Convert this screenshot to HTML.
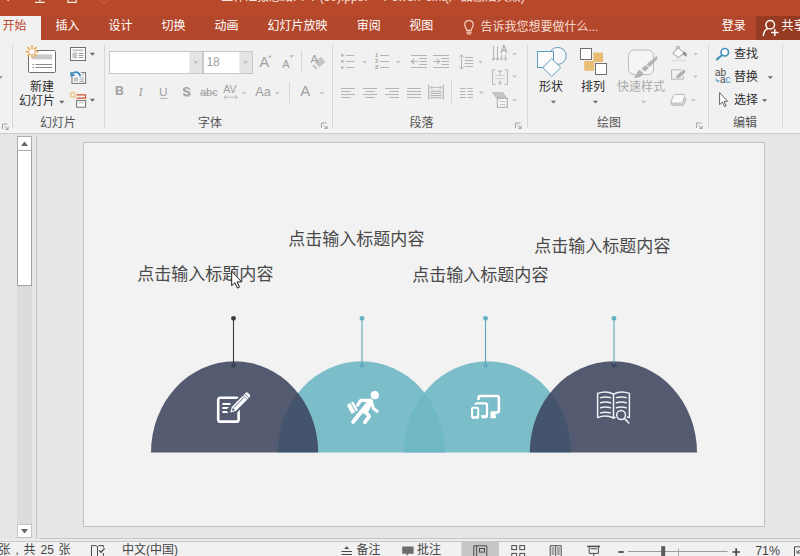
<!DOCTYPE html>
<html lang="zh-CN"><head><meta charset="utf-8"><title>PowerPoint</title>
<style>

*{box-sizing:border-box;margin:0;padding:0}
html,body{width:800px;height:556px;overflow:hidden;background:#e6e6e6;font-family:"Liberation Sans","Noto Sans CJK SC",sans-serif}
#app{position:relative;width:800px;height:556px;overflow:hidden;background:#e6e6e6}
.abs{position:absolute}
.t{position:absolute;display:block;white-space:nowrap;overflow:visible;line-height:1}
.t .h{position:absolute;left:0;top:0;color:inherit;white-space:nowrap;line-height:1.3;font-family:"Liberation Sans","Noto Sans CJK SC",sans-serif}
#titlebar{left:0;top:0;width:800px;height:40px;background:linear-gradient(#b9492b 0,#b9492b 16px,#b3472b 16px,#b3472b 40px)}
#tab-home{left:0;top:16px;width:41px;height:24px;background:#f1f1f1}
#share{left:756px;top:16px;width:44px;height:24px;background:#963a22}
#ribbon{left:0;top:40px;width:800px;height:93px;background:#f1f1f1}
#ribbon-line{left:0;top:129px;width:800px;height:5px;background:#f4f4f4;border-bottom:1px solid #cdcdcd}
.vsep{position:absolute;width:1px;background:#d8d8d8}
#work{left:0;top:134px;width:800px;height:405px;background:#e6e6e6}
#pane{left:39px;top:134px;width:770px;height:405px;border-bottom:1px solid #c6c6c6}
#status{left:0;top:539px;width:800px;height:17px;background:#f1f1f1;border-top:3px solid #ececec}
#status:after{content:'';position:absolute;left:0;top:-1px;width:800px;height:1px;background:#c8c8c8}
#slide{left:83px;top:142px;width:682px;height:385px;background:#f2f2f2;border:1px solid #c2c2c2}
.lat{position:absolute;white-space:nowrap;line-height:1;font-family:"Liberation Sans",sans-serif}

</style></head><body>
<div id="app">
<header class="titlebar-tabs">
<div id="titlebar" class="abs"></div>
<div id="tab-home" class="abs"></div>
<div id="share" class="abs"></div>
<span class="t" style="left:2.60px;top:18.70px;width:24.00px;height:15.60px;font-size:12px;color:#b7472a;"><span class="h">开始</span></span>
<span class="t" style="left:55.40px;top:18.70px;width:24.00px;height:15.60px;font-size:12px;color:#ffffff;"><span class="h">插入</span></span>
<span class="t" style="left:108.60px;top:18.70px;width:24.00px;height:15.60px;font-size:12px;color:#ffffff;"><span class="h">设计</span></span>
<span class="t" style="left:161.60px;top:18.70px;width:24.00px;height:15.60px;font-size:12px;color:#ffffff;"><span class="h">切换</span></span>
<span class="t" style="left:214.60px;top:18.70px;width:24.00px;height:15.60px;font-size:12px;color:#ffffff;"><span class="h">动画</span></span>
<span class="t" style="left:267.60px;top:18.70px;width:60.00px;height:15.60px;font-size:12px;color:#ffffff;"><span class="h">幻灯片放映</span></span>
<span class="t" style="left:356.80px;top:18.70px;width:24.00px;height:15.60px;font-size:12px;color:#ffffff;"><span class="h">审阅</span></span>
<span class="t" style="left:409.20px;top:18.70px;width:24.00px;height:15.60px;font-size:12px;color:#ffffff;"><span class="h">视图</span></span>
<span class="t" style="left:480.40px;top:19.50px;width:118.01px;height:15.60px;font-size:12px;color:#f8ddd3;"><span class="h">告诉我您想要做什么...</span></span>
<span class="t" style="left:721.80px;top:18.70px;width:24.00px;height:15.60px;font-size:12px;color:#ffffff;"><span class="h">登录</span></span>
<span class="t" style="left:781.40px;top:18.70px;width:18.60px;height:15.60px;font-size:12px;color:#ffffff;"><span class="h">共享</span></span>
<span class="t" style="left:221.20px;top:-9.80px;width:143.93px;height:15.60px;font-size:12px;color:#f6e3dc;"><span class="h">工作汇报总结PPT (50).pptx</span></span><span class="t" style="left:374.60px;top:-9.80px;width:4.16px;height:15.60px;font-size:12px;color:#f6e3dc;"><span class="h">-</span></span><span class="t" style="left:383.40px;top:-9.80px;width:144.12px;height:15.60px;font-size:12px;color:#f6e3dc;"><span class="h">PowerPoint(产品激活失败)</span></span>
<svg class="abs" style="left:0;top:0" width="800" height="40" viewBox="0 0 800 40"><path d="M35 2.4 H44.8 M39.9 0 V2.4" stroke="#fbeee9" stroke-width="1.1" fill="none"/><path d="M67.9 0 V2.4 H76.2 V0" stroke="#fbeee9" stroke-width="1.1" fill="none"/><circle cx="8.2" cy="0" r="1.1" fill="#f3d6cc"/><circle cx="104" cy="-3.6" r="6" fill="none" stroke="#c4593d" stroke-width="1.6"/><g fill="none" stroke="#f5cdbf" stroke-width="1.25" stroke-linecap="round"><path d="M466.9 30.4 C466.9 28.4 464.7 27.6 464.7 24.8 C464.7 22.4 466.5 20.6 469 20.6 C471.5 20.6 473.3 22.4 473.3 24.8 C473.3 27.6 471.1 28.4 471.1 30.4 Z"/><path d="M466.8 32.2 H471.2 M467.4 33.8 H470.6"/></g><g fill="none" stroke="#fff" stroke-width="1.5" stroke-linecap="round"><circle cx="770.2" cy="24.7" r="4.3"/><path d="M763.4 35.4 C763.6 32 765.4 29.8 767.6 28.6"/><path d="M774.8 29.4 V35.6 M771.7 32.5 H777.9" stroke-width="1.5"/></g></svg>
</header>
<section class="ribbon">
<div id="ribbon" class="abs"></div>
<div id="ribbon-line" class="abs"></div>
<div class="vsep" style="left:12px;top:44px;height:84px"></div>
<div class="vsep" style="left:104px;top:44px;height:84px"></div>
<div class="vsep" style="left:332px;top:44px;height:84px"></div>
<div class="vsep" style="left:527px;top:44px;height:84px"></div>
<div class="vsep" style="left:708px;top:44px;height:84px"></div>
<div class="vsep" style="left:782px;top:44px;height:84px"></div>
<span class="t" style="left:30.00px;top:80.20px;width:24.00px;height:15.60px;font-size:12px;color:#2e2e2e;"><span class="h">新建</span></span>
<span class="t" style="left:19.00px;top:93.70px;width:36.00px;height:15.60px;font-size:12px;color:#2e2e2e;"><span class="h">幻灯片</span></span>
<span class="t" style="left:40.00px;top:116.20px;width:36.00px;height:15.60px;font-size:12px;color:#555;"><span class="h">幻灯片</span></span>
<span class="t" style="left:198.00px;top:116.20px;width:24.00px;height:15.60px;font-size:12px;color:#555;"><span class="h">字体</span></span>
<span class="t" style="left:409.50px;top:116.20px;width:24.00px;height:15.60px;font-size:12px;color:#555;"><span class="h">段落</span></span>
<span class="t" style="left:539.00px;top:80.20px;width:24.00px;height:15.60px;font-size:12px;color:#2e2e2e;"><span class="h">形状</span></span>
<span class="t" style="left:581.00px;top:80.20px;width:24.00px;height:15.60px;font-size:12px;color:#2e2e2e;"><span class="h">排列</span></span>
<span class="t" style="left:617.00px;top:80.20px;width:48.00px;height:15.60px;font-size:12px;color:#ababab;"><span class="h">快速样式</span></span>
<span class="t" style="left:597.00px;top:116.20px;width:24.00px;height:15.60px;font-size:12px;color:#555;"><span class="h">绘图</span></span>
<span class="t" style="left:734.00px;top:47.20px;width:24.00px;height:15.60px;font-size:12px;color:#2e2e2e;"><span class="h">查找</span></span>
<span class="t" style="left:734.00px;top:70.20px;width:24.00px;height:15.60px;font-size:12px;color:#2e2e2e;"><span class="h">替换</span></span>
<span class="t" style="left:734.00px;top:93.20px;width:24.00px;height:15.60px;font-size:12px;color:#2e2e2e;"><span class="h">选择</span></span>
<span class="t" style="left:733.00px;top:116.20px;width:24.00px;height:15.60px;font-size:12px;color:#555;"><span class="h">编辑</span></span>
<svg class="abs" style="left:0;top:0" width="800" height="140" viewBox="0 0 800 140"><path d="M-2.50 75.90 H2.90 L0.20 78.90Z" fill="#9a9a9a"/><path d="M2.5 129.0 V124.0 H7.5" fill="none" stroke="#a4a4a4" stroke-width="1"/><path d="M4.6 126.1 L7.6 129.1" stroke="#a4a4a4" stroke-width="1"/><path d="M8.6 126.5 V130.1 H5 Z" fill="#a4a4a4"/><rect x="28.5" y="50.5" width="27" height="22" rx="1.2" fill="#fff" stroke="#6e6e6e"/><rect x="32.4" y="54.4" width="19.8" height="5" fill="#c9c9c9"/><path d="M32.4 64.5 h1.6 M35.4 64.5 H52.2 M32.4 67.5 h1.6 M35.4 67.5 H52.2" stroke="#8c8c8c" stroke-width="1"/><g transform="translate(32 51.7)"><circle r="4.4" fill="#f1f1f1"/><g stroke="#e9b35c" stroke-width="1.8" stroke-linecap="butt"><path d="M0 -2.6 V-6.4" transform="rotate(0)"/><path d="M0 -2.6 V-6.4" transform="rotate(45)"/><path d="M0 -2.6 V-6.4" transform="rotate(90)"/><path d="M0 -2.6 V-6.4" transform="rotate(135)"/><path d="M0 -2.6 V-6.4" transform="rotate(180)"/><path d="M0 -2.6 V-6.4" transform="rotate(225)"/><path d="M0 -2.6 V-6.4" transform="rotate(270)"/><path d="M0 -2.6 V-6.4" transform="rotate(315)"/></g><circle r="2.1" fill="#fff"/></g><path d="M59.20 100.85 H64.40 L61.80 103.75Z" fill="#6a6a6a"/><rect x="70.5" y="47.5" width="15" height="13" fill="#fff" stroke="#6e6e6e"/><rect x="72.5" y="49.4" width="11" height="1.8" fill="#c4c4c4"/><rect x="72.5" y="52.4" width="4.6" height="6" fill="#c4c4c4"/><path d="M78.6 53.5 H83.5 M78.6 55.5 H83.5 M78.6 57.5 H83.5" stroke="#9a9a9a" stroke-width="1"/><path d="M89.80 52.85 H95.00 L92.40 55.75Z" fill="#6a6a6a"/><rect x="72" y="72.6" width="13.6" height="10.8" fill="#fff" stroke="#6e6e6e"/><rect x="73.8" y="77.4" width="4.4" height="4.2" fill="#c4c4c4"/><path d="M79.5 77.9 H84 M79.5 79.9 H84 M79.5 81.7 H84" stroke="#9a9a9a" stroke-width="0.9"/><path d="M78.8 74.6 H84" stroke="#c4c4c4" stroke-width="1.4"/><path d="M80.4 76.2 C80.2 72.6 76.4 70.8 73 72.8" fill="none" stroke="#f1f1f1" stroke-width="4"/><path d="M80.2 76.4 C80 72.6 76.4 71 73.2 73" fill="none" stroke="#3e8fc6" stroke-width="1.9"/><path d="M70.2 71.6 L70.6 76.8 L75.6 75.4 Z" fill="#3e8fc6"/><path d="M76.6 94.9 H85.6 V98.1 H76.6" fill="none" stroke="#d1512e" stroke-width="1.1"/><rect x="76.6" y="100.6" width="9" height="6.6" fill="#fff" stroke="#6e6e6e" stroke-width="1"/><path d="M78.4 102.8 H83.8" stroke="#c4c4c4" stroke-width="1.2"/><g transform="translate(73 94.8)"><g stroke="#ecb96c" stroke-width="1"><path d="M0 -1.3 V-3.6" transform="rotate(0)"/><path d="M0 -1.3 V-3.6" transform="rotate(45)"/><path d="M0 -1.3 V-3.6" transform="rotate(90)"/><path d="M0 -1.3 V-3.6" transform="rotate(135)"/><path d="M0 -1.3 V-3.6" transform="rotate(180)"/><path d="M0 -1.3 V-3.6" transform="rotate(225)"/><path d="M0 -1.3 V-3.6" transform="rotate(270)"/><path d="M0 -1.3 V-3.6" transform="rotate(315)"/></g></g><path d="M89.80 98.85 H95.00 L92.40 101.75Z" fill="#6a6a6a"/><rect x="109.5" y="51.5" width="93" height="22" fill="#fff" stroke="#c8c8c8"/><rect x="189.4" y="52" width="12.6" height="21" fill="#e4e4e4"/><path d="M193.40 61.30 H198.00 L195.70 63.90Z" fill="#b8b8b8"/><rect x="203.5" y="51.5" width="49" height="22" fill="#fff" stroke="#c8c8c8"/><rect x="239.4" y="52" width="12.6" height="21" fill="#e4e4e4"/><path d="M243.30 61.30 H247.90 L245.60 63.90Z" fill="#b8b8b8"/><path d="M267.6 57.6 L269.8 55 L272 57.6Z" fill="#b4b4b4"/><path d="M289.4 55.2 H293.8 L291.6 57.8Z" fill="#b4b4b4"/><path d="M301.5 50.5 V71.5" stroke="#d6d6d6"/><path d="M320.8 56.8 L325.6 62 L319.4 67.2 L314.6 62.2 Z" fill="#c6c6c6"/><path d="M313 65.2 L316.8 68.8" stroke="#b0b0b0" stroke-width="1.5"/><path d="M224 97.2 H237.4 M226.2 95.2 L224 97.2 L226.2 99.2 M235.2 95.2 L237.4 97.2 L235.2 99.2" fill="none" stroke="#b4b4b4" stroke-width="0.9"/><path d="M242.00 91.90 H246.60 L244.30 94.50Z" fill="#c2c2c2"/><path d="M275.00 91.90 H279.60 L277.30 94.50Z" fill="#c2c2c2"/><path d="M289.5 82 V103.5" stroke="#d6d6d6"/><path d="M319.50 91.90 H324.10 L321.80 94.50Z" fill="#c2c2c2"/><path d="M321.5 128.0 V123.0 H326.5" fill="none" stroke="#a4a4a4" stroke-width="1"/><path d="M323.6 125.1 L326.6 128.1" stroke="#a4a4a4" stroke-width="1"/><path d="M327.6 125.5 V129.1 H324 Z" fill="#a4a4a4"/><path d="M159.6 98.4 H167.4" stroke="#b4b4b4" stroke-width="1"/><path d="M200.2 93.2 H216.4" stroke="#b4b4b4" stroke-width="0.9"/><g fill="#b4b4b4"><circle cx="342.3" cy="55.4" r="1.4"/><circle cx="342.3" cy="61.5" r="1.4"/><circle cx="342.3" cy="67.6" r="1.4"/></g><path d="M345.8 55.5 H354.2 M345.8 61.5 H354.2 M345.8 67.5 H354.2" stroke="#b4b4b4"/><path d="M362.20 60.90 H366.80 L364.50 63.50Z" fill="#c2c2c2"/><path d="M380.2 55.5 H389 M380.2 61.5 H389 M380.2 67.5 H389" stroke="#b4b4b4"/><path d="M396.00 60.90 H400.60 L398.30 63.50Z" fill="#c2c2c2"/><path d="M411 55.5 H427 M419.4 58.5 H427 M419.4 61.5 H427 M419.4 64.5 H427 M411 67.5 H427" stroke="#b4b4b4"/><path d="M411.4 61.5 H417.6 M414 58.9 L411.4 61.5 L414 64.1" fill="none" stroke="#b4b4b4" stroke-width="1.2"/><path d="M433 55.5 H449 M441.4 58.5 H449 M441.4 61.5 H449 M441.4 64.5 H449 M433 67.5 H449" stroke="#b4b4b4"/><path d="M433.4 61.5 H439.6 M437 58.9 L439.6 61.5 L437 64.1" fill="none" stroke="#b4b4b4" stroke-width="1.2"/><path d="M464.8 57.5 H473 M464.8 60.5 H473 M464.8 63.5 H473 M464.8 66.5 H473" stroke="#b4b4b4"/><path d="M461.5 54.8 V69 M459.2 57.2 L461.5 54.8 L463.8 57.2 M459.2 66.6 L461.5 69 L463.8 66.6" fill="none" stroke="#b4b4b4" stroke-width="1"/><path d="M478.30 60.90 H482.90 L480.60 63.50Z" fill="#c2c2c2"/><path d="M493.5 46 V60 M497.5 46 V60 M491.9 58 L493.5 60.4 L495.1 58 M495.9 58 L497.5 60.4 L499.1 58" fill="none" stroke="#b4b4b4" stroke-width="1"/><path d="M501.6 54.5 V60 M505.6 54.5 V60 M500.2 58.2 L501.6 60.4 L503 58.2 M504.2 58.2 L505.6 60.4 L507 58.2" fill="none" stroke="#b4b4b4" stroke-width="0.9"/><path d="M512.30 53.00 H516.90 L514.60 55.60Z" fill="#c2c2c2"/><path d="M495.5 69.8 H492.6 V84.4 H495.5 M504.5 69.8 H507.4 V84.4 H504.5" fill="none" stroke="#b4b4b4" stroke-width="1"/><path d="M495 75.5 H505 M495 78.5 H505" stroke="#cfcfcf"/><path d="M500 70 V75 M498 72 L500 70 L502 72 M500 79.6 V84.4 M498 82.4 L500 84.4 L502 82.4" fill="none" stroke="#b4b4b4" stroke-width="1"/><path d="M512.30 75.50 H516.90 L514.60 78.10Z" fill="#c2c2c2"/><path d="M341 88.5 H355 M341 91.5 H350.4 M341 94.5 H355 M341 97.5 H350.4" stroke="#b4b4b4"/><path d="M363 88.5 H377 M365.4 91.5 H374.6 M363 94.5 H377 M365.4 97.5 H374.6" stroke="#b4b4b4"/><path d="M385 88.5 H399 M389.6 91.5 H399 M385 94.5 H399 M389.6 97.5 H399" stroke="#b4b4b4"/><path d="M407 88.5 H421 M407 91.5 H421 M407 94.5 H421 M407 97.5 H421" stroke="#b4b4b4"/><path d="M428.7 84.6 V99.6 M443.3 84.6 V99.6" stroke="#a6a6a6" stroke-width="0.9"/><path d="M430.6 87.6 H441.4 M432.4 85.8 L430.6 87.6 L432.4 89.4 M439.6 85.8 L441.4 87.6 L439.6 89.4" fill="none" stroke="#b4b4b4" stroke-width="0.9"/><path d="M430.4 91.2 H441.6 M430.4 93.4 H441.6 M430.4 95.6 H441.6 M430.4 97.8 H441.6" stroke="#a6a6a6" stroke-width="0.9"/><path d="M451.5 80.5 V103" stroke="#d6d6d6"/><path d="M460 88.5 H465.6 M467.4 88.5 H473 M460 91.5 H465.6 M467.4 91.5 H473 M460 94.5 H465.6 M467.4 94.5 H473 M460 97.5 H465.6 M467.4 97.5 H473" stroke="#b4b4b4"/><path d="M479.00 91.60 H483.60 L481.30 94.20Z" fill="#c2c2c2"/><path d="M491.6 92 H503 L507.4 98.2 H496 Z" fill="#c4c4c4"/><rect x="497.3" y="98.3" width="10" height="9" fill="#f6f6f6" stroke="#a8a8a8" stroke-width="1"/><path d="M499.4 101.5 H505.4 M499.4 104.5 H505.4" stroke="#c4c4c4"/><path d="M512.30 98.90 H516.90 L514.60 101.50Z" fill="#c2c2c2"/><path d="M515.5 128.0 V123.0 H520.5" fill="none" stroke="#a4a4a4" stroke-width="1"/><path d="M517.6 125.1 L520.6 128.1" stroke="#a4a4a4" stroke-width="1"/><path d="M521.6 125.5 V129.1 H518 Z" fill="#a4a4a4"/><circle cx="557.7" cy="55.9" r="8.5" fill="#f8f8f8" stroke="#5d9dbe" stroke-width="1"/><rect x="537.5" y="51.5" width="16" height="16" fill="#fafafa" stroke="#5d9dbe" stroke-width="1"/><path d="M551.8 58.6 L560.8 67.5 L551.8 76.4 L542.8 67.5 Z" fill="#fbfbfb" stroke="#5d9dbe" stroke-width="1"/><path d="M550.80 100.65 H556.00 L553.40 103.55Z" fill="#6a6a6a"/><rect x="593.2" y="52.6" width="9.8" height="9.4" fill="#e8bc72"/><rect x="584.2" y="61" width="10" height="9.8" fill="#e8bc72"/><rect x="580.5" y="48.5" width="11" height="11" fill="#fff" stroke="#707070"/><rect x="595.5" y="63.5" width="11" height="11" fill="#fff" stroke="#707070"/><path d="M592.90 100.65 H598.10 L595.50 103.55Z" fill="#6a6a6a"/><rect x="628.5" y="50" width="25" height="24.6" rx="5.6" fill="#f5f5f5" stroke="#bdbdbd"/><path d="M633.6 77.6 C637.4 78.2 642.4 77 643.2 73.4 C643.6 71 641.8 69.4 639.6 70 C636.6 70.8 637.4 74.6 633.6 77.6 Z" fill="#b4b4b4"/><path d="M641.6 68.6 L645 71.8 L657 59.4 L657.2 55.4 Z" fill="#b4b4b4"/><path d="M640 69.4 L644.2 73.4" stroke="#f3f3f3" stroke-width="1.1"/><path d="M645.6 64.2 L649.4 67.6" stroke="#f3f3f3" stroke-width="1.1"/><path d="M641.10 100.65 H646.30 L643.70 103.55Z" fill="#c2c2c2"/><path d="M678 47.6 L683.8 52.6 L678.6 57.8 L672.8 53.4 Z" fill="#fafafa" stroke="#b4b4b4" stroke-width="1.1" stroke-linejoin="round"/><path d="M676.6 50.4 V46.4 H679.4 V49" fill="none" stroke="#b4b4b4" stroke-width="1"/><path d="M683.6 51.4 C686.4 51.8 687.4 54.4 686.6 57.6 C686 56 685.2 55.2 683 55.4 Z" fill="#8f8f8f"/><rect x="672" y="59.4" width="14.4" height="2.4" fill="#e2e2e2"/><path d="M693.20 53.00 H697.80 L695.50 55.60Z" fill="#c2c2c2"/><path d="M681.4 69.8 H671.6 V79.2 H683.4 V76.4" fill="none" stroke="#b4b4b4" stroke-width="1"/><path d="M675.6 79 L676.6 75.6 L683.6 69.2 L686.2 71.8 L679.2 78.2 Z" fill="#adadad" stroke="#f1f1f1" stroke-width="0.6"/><path d="M693.20 75.50 H697.80 L695.50 78.10Z" fill="#c2c2c2"/><path d="M675.4 94.4 H683 C684.6 94.4 685.2 95.6 684.6 97 L682.8 101.4 C682.2 102.8 681.4 103.2 680 103.2 H673 C671.4 103.2 670.8 102 671.4 100.6 L673.2 96.2 C673.8 94.8 674.4 94.4 675.4 94.4 Z" fill="#fafafa" stroke="#b4b4b4" stroke-width="1"/><path d="M671.2 101.6 C671 103.8 672 105.2 674 105.2 H680.6 C682.6 105.2 683.6 104.2 684.4 102.4 L685.6 98.6" fill="none" stroke="#c2c2c2" stroke-width="1.8" stroke-linecap="round"/><path d="M691.10 98.90 H695.70 L693.40 101.50Z" fill="#c2c2c2"/><path d="M696.5 128.0 V123.0 H701.5" fill="none" stroke="#a4a4a4" stroke-width="1"/><path d="M698.6 125.1 L701.6 128.1" stroke="#a4a4a4" stroke-width="1"/><path d="M702.6 125.5 V129.1 H699 Z" fill="#a4a4a4"/><path d="M722 55 L717 59.4" stroke="#4793b9" stroke-width="2.2" stroke-linecap="round"/><circle cx="724.8" cy="52.2" r="3.7" fill="#fff" stroke="#4793b9" stroke-width="1.7"/><path d="M716.2 78.6 V81 H719 M718 79.8 L719.2 81 L718 82.2" fill="none" stroke="#4793b9" stroke-width="0.9"/><path d="M767.70 76.15 H772.90 L770.30 79.05Z" fill="#6a6a6a"/><path d="M719.6 92.6 V104.6 L722.4 102 L724.6 106.6 L726.2 105.8 L724 101.4 L727.6 101.2 Z" fill="#fff" stroke="#555" stroke-width="0.9" stroke-linejoin="round"/><path d="M762.00 99.15 H767.20 L764.60 102.05Z" fill="#6a6a6a"/></svg>
<span class="t" style="left:206.40px;top:54.76px;width:13.32px;height:15.60px;font-size:12px;color:#a0a0a0;"><span class="h">18</span></span>
<span class="t" style="left:259.40px;top:52.82px;width:9.60px;height:18.72px;font-size:14.4px;color:#a0a0a0;"><span class="h">A</span></span>
<span class="t" style="left:282.20px;top:56.52px;width:7.27px;height:14.17px;font-size:10.9px;color:#a0a0a0;"><span class="h">A</span></span>
<span class="t" style="left:310.60px;top:50.84px;width:7.74px;height:15.08px;font-size:11.6px;color:#a0a0a0;"><span class="h">A</span></span>
<span class="t" style="left:115.00px;top:84.13px;width:8.81px;height:15.86px;font-size:12.2px;color:#a0a0a0;"><span class="h" style="font-weight:bold">B</span></span>
<span class="t" style="left:138.40px;top:83.68px;width:4.90px;height:16.38px;font-size:12.6px;color:#a0a0a0;"><span class="h" style="font-family:'Liberation Serif',serif;font-style:italic">I</span></span>
<span class="t" style="left:159.00px;top:84.99px;width:8.65px;height:15.34px;font-size:11.8px;color:#a0a0a0;"><span class="h">U</span></span>
<span class="t" style="left:182.20px;top:83.86px;width:8.40px;height:16.38px;font-size:12.6px;color:#a0a0a0;filter:drop-shadow(1px 1.2px 0.6px #cfcfcf)"><span class="h" style="font-weight:bold">S</span></span>
<span class="t" style="left:199.90px;top:85.07px;width:18.94px;height:14.56px;font-size:11.2px;color:#a0a0a0;"><span class="h">abc</span></span>
<span class="t" style="left:223.20px;top:82.93px;width:14.14px;height:13.78px;font-size:10.6px;color:#a0a0a0;"><span class="h">AV</span></span>
<span class="t" style="left:255.20px;top:84.45px;width:14.99px;height:16.64px;font-size:12.8px;color:#a0a0a0;"><span class="h">Aa</span></span>
<span class="t" style="left:300.30px;top:82.18px;width:9.94px;height:19.37px;font-size:14.9px;color:#a0a0a0;"><span class="h">A</span></span>
<span class="t" style="left:715.00px;top:65.94px;width:11.21px;height:13.00px;font-size:10px;color:#4a4a4a;"><span class="h">ab</span></span>
<span class="t" style="left:720.00px;top:72.94px;width:5.63px;height:13.00px;font-size:10px;color:#4a4a4a;"><span class="h">a</span></span>
<span class="t" style="left:725.60px;top:72.94px;width:5.10px;height:13.00px;font-size:10px;color:#3b8fc0;"><span class="h">c</span></span>
<span class="t" style="left:375.00px;top:51.91px;width:3.42px;height:7.54px;font-size:5.8px;color:#a0a0a0;"><span class="h" style="font-weight:bold">1</span></span>
<span class="t" style="left:375.00px;top:57.91px;width:3.42px;height:7.54px;font-size:5.8px;color:#a0a0a0;"><span class="h" style="font-weight:bold">2</span></span>
<span class="t" style="left:375.00px;top:63.91px;width:3.42px;height:7.54px;font-size:5.8px;color:#a0a0a0;"><span class="h" style="font-weight:bold">3</span></span>
<span class="t" style="left:500.40px;top:42.74px;width:6.67px;height:13.00px;font-size:10px;color:#a0a0a0;"><span class="h">A</span></span>
</section>
<main class="workspace">
<div id="work" class="abs"></div>
<div id="pane" class="abs"></div>
<div id="slide" class="abs"></div>
<div class="abs" style="left:17px;top:136px;width:15px;height:402px;background:#dcdcdc"></div>
<div class="abs" style="left:17px;top:136px;width:15px;height:15px;background:#fff;border:1px solid #ababab"></div>
<div class="abs" style="left:17px;top:151px;width:15px;height:135px;background:#fff;border:1px solid #a2a2a2;border-top:0"></div>
<div class="abs" style="left:17px;top:524px;width:15px;height:14px;background:#fff;border:1px solid #c4c4c4"></div>
<svg class="abs" style="left:17px;top:136px" width="15" height="402"><path d="M4 10 L7.5 5.5 L11 10Z" fill="#666"/><path d="M4 393 L11 393 L7.5 397.5Z" fill="#666"/></svg>
<div class="abs" style="left:36px;top:136px;width:1px;height:405px;background:#c4c4c4"></div>
<svg class="abs" style="left:0;top:0" width="800" height="556" viewBox="0 0 800 556">
<defs><clipPath id="cb"><rect x="100" y="300" width="650" height="152.60000000000002"/></clipPath></defs>
<g clip-path="url(#cb)" fill-opacity="0.86">
<ellipse cx="361.4" cy="452.6" rx="83.6" ry="91.4" fill="#6fb8c5" fill-opacity="0.91"/>
<ellipse cx="487.4" cy="452.6" rx="83.6" ry="91.4" fill="#6fb8c5" fill-opacity="0.91"/>
<ellipse cx="234.6" cy="452.6" rx="83.6" ry="91.4" fill="#3a425c"/>
<ellipse cx="613.4" cy="452.6" rx="83.6" ry="91.4" fill="#3a425c"/>
</g>
<g stroke-width="1.1">
<line x1="233.5" y1="318" x2="233.5" y2="365" stroke="#3b3b45"/>
<line x1="362" y1="318" x2="362" y2="365" stroke="#5ba7bb"/>
<line x1="485.5" y1="318" x2="485.5" y2="365" stroke="#5ba7bb"/>
<line x1="614" y1="318" x2="614" y2="365" stroke="#5ba7bb"/>
</g>
<circle cx="233.5" cy="318.3" r="2.4" fill="#3b3b45"/><circle cx="233.5" cy="365.3" r="2.4" fill="#3c4258"/>
<circle cx="362" cy="318.3" r="2.4" fill="#5fb0c3"/><circle cx="362" cy="365.3" r="2.4" fill="#63adbd"/>
<circle cx="485.5" cy="318.3" r="2.4" fill="#5fb0c3"/><circle cx="485.5" cy="365.3" r="2.4" fill="#63adbd"/>
<circle cx="614" cy="318.3" r="2.4" fill="#5fb0c3"/><circle cx="614" cy="365.3" r="2.4" fill="#3c4a66"/>
</svg>
<span class="t" style="left:137.20px;top:264.30px;width:136.40px;height:23.40px;font-size:17.05px;color:#4a4a4a;"><span class="h">点击输入标题内容</span></span>
<span class="t" style="left:288.20px;top:229.30px;width:136.40px;height:23.40px;font-size:17.05px;color:#4a4a4a;"><span class="h">点击输入标题内容</span></span>
<span class="t" style="left:412.20px;top:265.30px;width:136.40px;height:23.40px;font-size:17.05px;color:#4a4a4a;"><span class="h">点击输入标题内容</span></span>
<span class="t" style="left:534.20px;top:236.30px;width:136.40px;height:23.40px;font-size:17.05px;color:#4a4a4a;"><span class="h">点击输入标题内容</span></span>
<svg class="abs" style="left:229px;top:268px" width="18" height="24" viewBox="0 0 18 24"><path d="M2.7 3.3 L2.7 17.7 L6 14.7 L8.4 20.1 L10.5 19.2 L8.1 13.9 L12.6 13.9 Z" fill="#fff" stroke="#222" stroke-width="1" stroke-linejoin="round"/></svg>
<svg class="abs" style="left:0;top:0" width="800" height="556" viewBox="0 0 800 556">
<!-- note + pencil -->
<g fill="none" stroke="#fff" stroke-linecap="round" stroke-linejoin="round">
<rect x="218.2" y="397.8" width="20.4" height="23.8" rx="2.2" stroke-width="2.6"/>
<path d="M222.4 404 H230.4 M222.4 408 H230.4 M222.4 412 H228.2" stroke-width="1.9" stroke-linecap="butt"/>
</g>
<g transform="translate(230.3 412.6) rotate(-45.5)">
<path d="M-1.5 -4.8 H28 V4.8 H-1.5 Z" fill="#545c73"/>
<path d="M0 0 L5 -2.9 H24.8 a1.6 1.6 0 0 1 1.6 1.6 V1.3 a1.6 1.6 0 0 1 -1.6 1.6 H5 Z" fill="#fff"/>
<path d="M2.3 0 L5.2 -1.5 V1.5 Z" fill="#545c73"/>
<path d="M6.2 -0.9 H20" stroke="#545c73" stroke-width="0.9" fill="none"/>
<path d="M21.2 -2.9 V2.9 M23.4 -2.9 V2.9" stroke="#545c73" stroke-width="0.8"/>
</g>
<!-- running man -->
<g fill="none" stroke="#fff" stroke-linecap="round" stroke-linejoin="round">
<circle cx="374.8" cy="395.2" r="4.1" fill="#fff" stroke="none"/>
<path d="M368.4 403 L353.2 421.8" stroke-width="4"/>
<path d="M370.2 401.4 L365.4 411.4" stroke-width="5.6"/>
<path d="M369.6 400.4 L360.8 400.4 L357.6 405.2" stroke-width="3.2"/>
<path d="M371.4 401.4 L373.4 408.4 L377.2 411.2" stroke-width="3.1"/>
<path d="M365.6 411.6 L369.2 416.4 L364.8 422.4" stroke-width="3.6"/>
</g>
<g transform="translate(352.4 407.8) rotate(-28)">
<rect x="-3.6" y="-5.2" width="7.4" height="10.2" rx="0.8" fill="#fff"/>
<path d="M0.9 -5.2 V5" stroke="#7bbdc9" stroke-width="0.9"/>
</g>
<!-- devices -->
<g fill="none" stroke="#fff" stroke-linejoin="round">
<rect x="478.5" y="396" width="20.4" height="16.4" rx="2" stroke-width="2.5"/>
<path d="M490 413.5 h4.6 v3.4 h-4.6z M488.6 417.2 h7.4" stroke-width="2" fill="#fff"/>
<rect x="473.1" y="401" width="16.3" height="18.4" rx="2.4" fill="#7bbdc9" stroke="#7bbdc9" stroke-width="2.2"/>
<rect x="475.5" y="403.4" width="11.5" height="13.6" rx="1.6" stroke-width="2.3"/>
<path d="M475.5 416.6 H487" stroke-width="3"/>
<rect x="469.9" y="405.6" width="10.3" height="14.4" rx="2" fill="#7bbdc9" stroke="#7bbdc9" stroke-width="1.6"/>
<rect x="472" y="407.8" width="6.2" height="10" rx="1" stroke-width="2"/>
<path d="M472 417.4 H478.2" stroke-width="2.6"/>
</g>
<circle cx="481.2" cy="417.6" r="0.6" fill="#7bbdc9"/><circle cx="475.1" cy="417.9" r="0.55" fill="#7bbdc9"/>
<!-- book + magnifier -->
<g fill="none" stroke="#f0f1f5" stroke-width="1.5" stroke-linejoin="round" stroke-linecap="round">
<path d="M613.5 394.2 C609 391.6 602.5 391.6 597.6 393.4 V417.6 C602.5 415.8 609 415.8 613.5 418 C618 415.8 624.5 415.8 629.4 417.6 V393.4 C624.5 391.6 618 391.6 613.5 394.2 Z"/>
<path d="M613.5 394.2 V418"/>
<path d="M600.6 397.6 Q605.5 396.2 610.4 397.6 M600.6 402.7 Q605.5 401.3 610.4 402.7 M600.6 407.8 Q605.5 406.4 610.4 407.8 M600.6 412.9 Q605.5 411.5 610.4 412.9"/>
<path d="M616.4 397.6 Q621.3 396.2 626.2 397.6 M616.4 402.7 Q621.3 401.3 626.2 402.7 M616.4 407.8 Q621.3 406.4 626.2 407.8"/>
<circle cx="621.1" cy="415" r="4.6" fill="#545c73" stroke="#545c73" stroke-width="3"/>
<circle cx="621.1" cy="415" r="4.4"/>
<path d="M624.4 418.4 L628.8 423" stroke-width="1.6"/>
</g>
</svg>
</main>
<footer class="statusbar">
<div id="status" class="abs"></div>
<span class="t" style="left:-1.60px;top:543.40px;width:12.00px;height:15.60px;font-size:12px;color:#444;"><span class="h">张</span></span><span class="t" style="left:15.60px;top:543.40px;width:3.34px;height:15.60px;font-size:12px;color:#444;"><span class="h">,</span></span><span class="t" style="left:23.40px;top:543.40px;width:12.00px;height:15.60px;font-size:12px;color:#444;"><span class="h">共</span></span><span class="t" style="left:40.60px;top:543.40px;width:13.32px;height:15.60px;font-size:12px;color:#444;"><span class="h">25</span></span><span class="t" style="left:58.40px;top:543.40px;width:12.00px;height:15.60px;font-size:12px;color:#444;"><span class="h">张</span></span>
<span class="t" style="left:122.00px;top:543.40px;width:56.11px;height:15.60px;font-size:12px;color:#444;"><span class="h">中文(中国)</span></span>
<span class="t" style="left:356.60px;top:543.40px;width:24.00px;height:15.60px;font-size:12px;color:#444;"><span class="h">备注</span></span>
<span class="t" style="left:417.00px;top:543.40px;width:24.00px;height:15.60px;font-size:12px;color:#444;"><span class="h">批注</span></span>
<span class="t" style="left:755.20px;top:543.34px;width:25.18px;height:16.12px;font-size:12.4px;color:#444;"><span class="h">71%</span></span>
<svg class="abs" style="left:0;top:536px" width="800" height="20" viewBox="0 536 800 20"><path d="M91.5 556 V545.6 H96 L97.5 546.8 L99 545.6 H103.4 V547.6 M97.5 546.8 V556 M103.4 553 V556" fill="none" stroke="#4a4a4a" stroke-width="1"/><path d="M99.2 550.4 L101 552.2 L104.6 548.4" fill="none" stroke="#4a4a4a" stroke-width="1.3"/><path d="M344.2 549 L346.7 546.2 L349.2 549 Z" fill="#4a4a4a"/><path d="M341.4 551.5 H352 M341.4 554.5 H352" stroke="#4a4a4a" stroke-width="1"/><path d="M402.2 546.6 H413.6 V553.8 H408.8 L406.6 556 V553.8 H402.2 Z" fill="#6e6e6e"/><rect x="461.4" y="541.4" width="37.6" height="15" fill="#c6c6c6"/><path d="M473.8 556 V545.8 H486.8 V556 M476.7 545.8 V556" fill="none" stroke="#4a4a4a" stroke-width="1"/><rect x="479.5" y="548.5" width="5" height="3.6" fill="none" stroke="#4a4a4a" stroke-width="1"/><g fill="none" stroke="#4a4a4a" stroke-width="1"><rect x="511.8" y="545.6" width="4.8" height="4"/><rect x="519.8" y="545.6" width="4.8" height="4"/><rect x="511.8" y="553.4" width="4.8" height="4"/><rect x="519.8" y="553.4" width="4.8" height="4"/></g><path d="M550.2 556 V545.7 H561.2 V556 M555.7 545.7 V556" fill="none" stroke="#4a4a4a" stroke-width="1"/><path d="M551.6 548 H554.4 M551.6 550 H554.4 M551.6 552 H554.4 M551.6 554 H554.4 M557 548 H559.8 M557 550 H559.8 M557 552 H559.8 M557 554 H559.8" stroke="#4a4a4a" stroke-width="0.9"/><path d="M587.3 546.4 H600.1" stroke="#4a4a4a" stroke-width="1.5"/><path d="M589.2 547 V553.4 H598.4 V547 M593.8 553.4 V556 M590.6 548.8 H597" fill="none" stroke="#4a4a4a" stroke-width="1"/><path d="M618.2 552 H623.8" stroke="#4a4a4a" stroke-width="1.7"/><path d="M627.8 551.5 H727.6" stroke="#9c9c9c" stroke-width="1"/><path d="M678.5 548.4 V556" stroke="#a8a8a8" stroke-width="1"/><rect x="661.2" y="546.2" width="4" height="10" fill="#5a5a5a"/><path d="M732.4 552 H740 M736.2 548.2 V555.8" stroke="#4a4a4a" stroke-width="1.7"/><path d="M800 546.8 H794.5 V556 M797 550.4 V553 H800 M797.2 552.8 L800 550" fill="none" stroke="#4a4a4a" stroke-width="1"/></svg>
</footer>
</div>
</body></html>
